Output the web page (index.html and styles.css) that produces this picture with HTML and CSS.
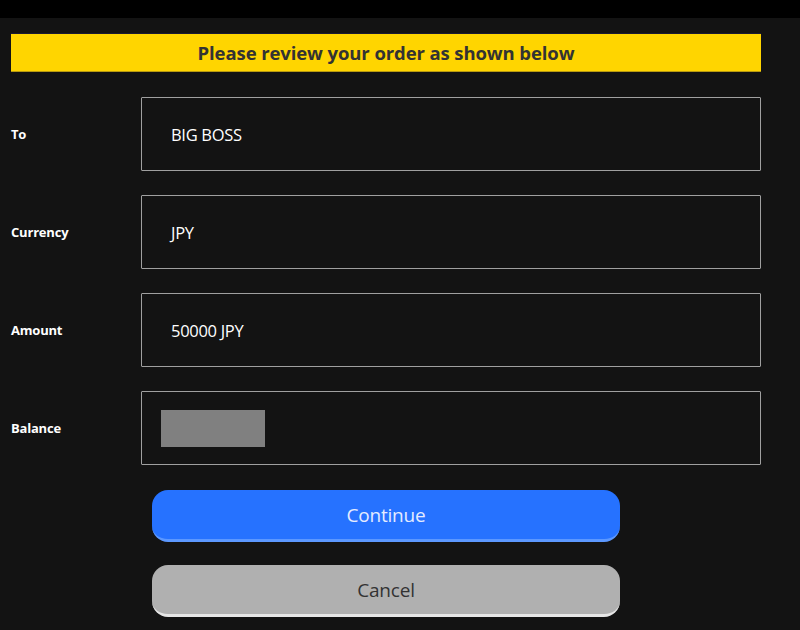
FILE: index.html
```
<!DOCTYPE html>
<html>
	<head>
		<title>Review order</title>
		<meta charset="utf-8">
		<link rel="stylesheet" href="styles.css">
	</head>
	<body>
		<div class="topbar"></div>
		<div class="page">
			<div class="banner">Please review your order as shown below</div>

			<div class="row">
				<div class="label">To</div>
				<div class="value">BIG BOSS</div>
			</div>
			<div class="row">
				<div class="label">Currency</div>
				<div class="value">JPY</div>
			</div>
			<div class="row">
				<div class="label">Amount</div>
				<div class="value">50000 JPY</div>
			</div>
			<div class="row">
				<div class="label">Balance</div>
				<div class="value"><span class="mask"></span></div>
			</div>

			<div class="actions">
				<button class="btn btn-primary">Continue</button>
				<button class="btn btn-cancel">Cancel</button>
			</div>
		</div>
	</body>
</html>
```

FILE: styles.css
```
*
{
	box-sizing: border-box;
}
body
{
	margin: 0px;
	padding: 0px;
	background: #131313;
	font-family: "Open Sans", "Noto Sans", sans-serif;
	color: #fff;
}
.topbar{
	height: 18px;
	background: #000;
}
.page{
	width: 761px;
	padding: 15px 0 0 11px;
}
.banner{
	height: 39px;
	background: #ffd500;
	border-top: 1px solid #1a1a33;
	border-bottom: 1px solid #b89a10;
	color: #333;
	font-weight: 700;
	font-size: 18.5px;
	letter-spacing: -0.1px;
	display: flex;
	align-items: center;
	justify-content: center;
	margin-bottom: 25px;
}
.row{
	display: flex;
	align-items: center;
	margin-bottom: 24px;
}
.label{
	width: 130px;
	font-size: 13px;
	font-weight: 700;
	letter-spacing: -0.2px;
}
.value{
	flex: 1;
	height: 74px;
	border: 1px solid #a0a0a0;
	border-radius: 1px;
	display: flex;
	align-items: center;
	padding-left: 29px;
	font-size: 16.5px;
	letter-spacing: -0.3px;
}
.mask{
	display: block;
	width: 104px;
	height: 37px;
	margin-left: -10px;
	background: #808080;
}
.actions{
	display: flex;
	flex-direction: column;
	gap: 23px;
	padding: 1px 0 0 141px;
}
.btn{
	width: 468px;
	height: 52px;
	border: none;
	border-radius: 16px;
	font-family: "Open Sans", "Noto Sans", sans-serif;
	font-size: 19px;
	letter-spacing: -0.2px;
	padding: 0;
}
.btn-primary{
	background: #2672ff;
	border-bottom: 3px solid #5c98ff;
	color: #e4ebff;
}
.btn-cancel{
	background: #b0b0b0;
	border-bottom: 3px solid #e6e6e6;
	color: #333;
}
```
